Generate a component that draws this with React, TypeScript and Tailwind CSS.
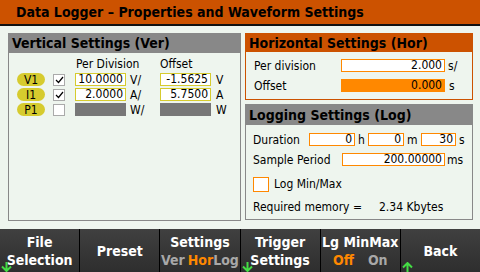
const font = { fontFamily: '"DejaVu Sans Condensed", "Liberation Sans Narrow", "Liberation Sans", sans-serif' };

const Pill = ({ label }: { label: string }) => (
  <div className="w-[28px] h-[13px] rounded-full bg-[#d6cb2e] flex items-center justify-center text-[12px] leading-none text-black">
    {label}
  </div>
);

const Check = ({ on }: { on: boolean }) => (
  <div className="w-[12px] h-[12px] border border-[#aaaaaa] bg-white flex items-center justify-center">
    {on && (
      <svg width="9" height="8" viewBox="0 0 9 8">
        <path d="M1 4 L3.5 6.5 L8 1" stroke="black" strokeWidth="1.2" fill="none" />
      </svg>
    )}
  </div>
);

const YField = ({ value, w }: { value?: string; w: string }) =>
  value === undefined ? (
    <div className={`${w} h-[13px] bg-[#777777]`} />
  ) : (
    <div className={`${w} h-[13px] bg-white border border-[#d6cb2e] text-right pr-[2px] text-[12px] leading-[11px]`}>{value}</div>
  );

const OField = ({ value, w, fill }: { value: string; w: string; fill?: boolean }) => (
  <div
    className={`${w} h-[13px] border border-[#ff8800] text-right pr-[2px] text-[12px] leading-[11px] ${fill ? 'bg-[#ff8800]' : 'bg-white'}`}
  >
    {value}
  </div>
);

const rows = [
  { ch: 'V1', on: true, div: '10.0000', du: 'V/', off: '-1.5625', ou: 'V' },
  { ch: 'I1', on: true, div: '2.0000', du: 'A/', off: '5.7500', ou: 'A' },
  { ch: 'P1', on: false, div: undefined, du: 'W/', off: undefined, ou: 'W' },
];

const Arrow = ({ up }: { up?: boolean }) => (
  <svg width="11" height="10" viewBox="0 0 11 10" className="absolute left-[1px] bottom-0">
    {up ? (
      <path d="M5.5 1 L5.5 10 M1 5.5 L5.5 1 L10 5.5" stroke="#44dd44" strokeWidth="2" fill="none" />
    ) : (
      <path d="M5.5 0 L5.5 9 M1 4.5 L5.5 9 L10 4.5" stroke="#44dd44" strokeWidth="2" fill="none" />
    )}
  </svg>
);

const SoftKey = ({ children, arrow }: { children: React.ReactNode; arrow?: 'up' | 'down' }) => (
  <div className="relative flex-1 h-full flex flex-col items-center justify-center bg-gradient-to-b from-[#404040] to-[#2e2e2e] border-l border-black first:border-l-0 text-white font-bold text-[14px] leading-[18px]">
    {children}
    {arrow && <Arrow up={arrow === 'up'} />}
  </div>
);

export default function App() {
  return (
    <div className="w-[480px] h-[272px] bg-[#eef5ee] flex flex-col overflow-hidden text-black" style={font}>
      <div className="h-[26px] shrink-0 bg-[#cc5200] border-b-2 border-[#111] flex items-center pl-[16px] text-[14px] font-bold">
        Data Logger – Properties and Waveform Settings
      </div>

      <div className="flex gap-[4px] pl-[8px] pt-[7px] h-[195px] shrink-0">
        <div className="w-[233px] h-[188px] border border-[#888] flex flex-col">
          <div className="h-[19px] bg-[#888888] flex items-center pl-[3px] text-[14px] font-bold">Vertical Settings (Ver)</div>
          <div className="flex pl-[67px] text-[12px] leading-[13px] mt-[5px]">
            <span className="w-[84px]">Per Division</span>
            <span>Offset</span>
          </div>
          <div className="flex flex-col gap-[2px] pl-[8px] mt-[2px] text-[12px]">
            {rows.map((r) => (
              <div key={r.ch} className="flex items-center h-[13px]">
                <Pill label={r.ch} />
                <div className="ml-[8px]">
                  <Check on={r.on} />
                </div>
                <div className="ml-[10px]">
                  <YField value={r.div} w="w-[51px]" />
                </div>
                <span className="ml-[4px] w-[30px]">{r.du}</span>
                <YField value={r.off} w="w-[51px]" />
                <span className="ml-[5px]">{r.ou}</span>
              </div>
            ))}
          </div>
        </div>

        <div className="w-[228px] flex flex-col gap-[4px]">
          <div className="h-[67px] border border-[#cc5200] flex flex-col">
            <div className="h-[18px] bg-[#cc5200] flex items-center pl-[3px] text-[14px] font-bold">Horizontal Settings (Hor)</div>
            <div className="flex flex-col gap-[7px] pt-[7px] pl-[8px] text-[12px]">
              <div className="flex items-center h-[13px]">
                <span className="w-[87px]">Per division</span>
                <OField value="2.000" w="w-[104px]" />
                <span className="ml-[3px]">s/</span>
              </div>
              <div className="flex items-center h-[13px]">
                <span className="w-[87px]">Offset</span>
                <OField value="0.000" w="w-[104px]" fill />
                <span className="ml-[4px]">s</span>
              </div>
            </div>
          </div>

          <div className="h-[116px] border border-[#888] flex flex-col">
            <div className="h-[20px] bg-[#888888] flex items-center pl-[3px] text-[14px] font-bold">Logging Settings (Log)</div>
            <div className="flex flex-col pt-[8px] pl-[7px] text-[12px]">
              <div className="flex items-center h-[13px]">
                <span className="w-[56px]">Duration</span>
                <OField value="0" w="w-[46px]" />
                <span className="ml-[3px] w-[10px]">h</span>
                <OField value="0" w="w-[36px]" />
                <span className="ml-[3px] w-[14px]">m</span>
                <OField value="30" w="w-[35px]" />
                <span className="ml-[3px]">s</span>
              </div>
              <div className="flex items-center h-[13px] mt-[7px]">
                <span className="w-[89px]">Sample Period</span>
                <OField value="200.00000" w="w-[103px]" />
                <span className="ml-[2px]">ms</span>
              </div>
              <div className="flex items-center mt-[9px]">
                <div className="w-[16px] h-[15px] border border-[#ff8800] bg-white" />
                <span className="ml-[5px]">Log Min/Max</span>
              </div>
              <div className="flex items-center mt-[5px]">
                <span className="w-[126px]">Required memory =</span>
                <span>2.34 Kbytes</span>
              </div>
            </div>
          </div>
        </div>
      </div>

      <div className="h-[43px] mt-auto flex bg-black">
        <SoftKey arrow="down">
          <span>File</span>
          <span>Selection</span>
        </SoftKey>
        <SoftKey>
          <span>Preset</span>
        </SoftKey>
        <SoftKey>
          <span>Settings</span>
          <span>
            <span className="text-[#a8a8a8]">Ver</span>
            <span className="text-[#ff8800] ml-[3px]">Hor</span>
            <span className="text-[#a8a8a8]">Log</span>
          </span>
        </SoftKey>
        <SoftKey arrow="down">
          <span>Trigger</span>
          <span>Settings</span>
        </SoftKey>
        <SoftKey>
          <span>Lg MinMax</span>
          <span>
            <span className="text-[#ff8800]">Off</span>
            <span className="text-[#a8a8a8] ml-[14px]">On</span>
          </span>
        </SoftKey>
        <SoftKey arrow="up">
          <span>Back</span>
        </SoftKey>
      </div>
    </div>
  );
}
